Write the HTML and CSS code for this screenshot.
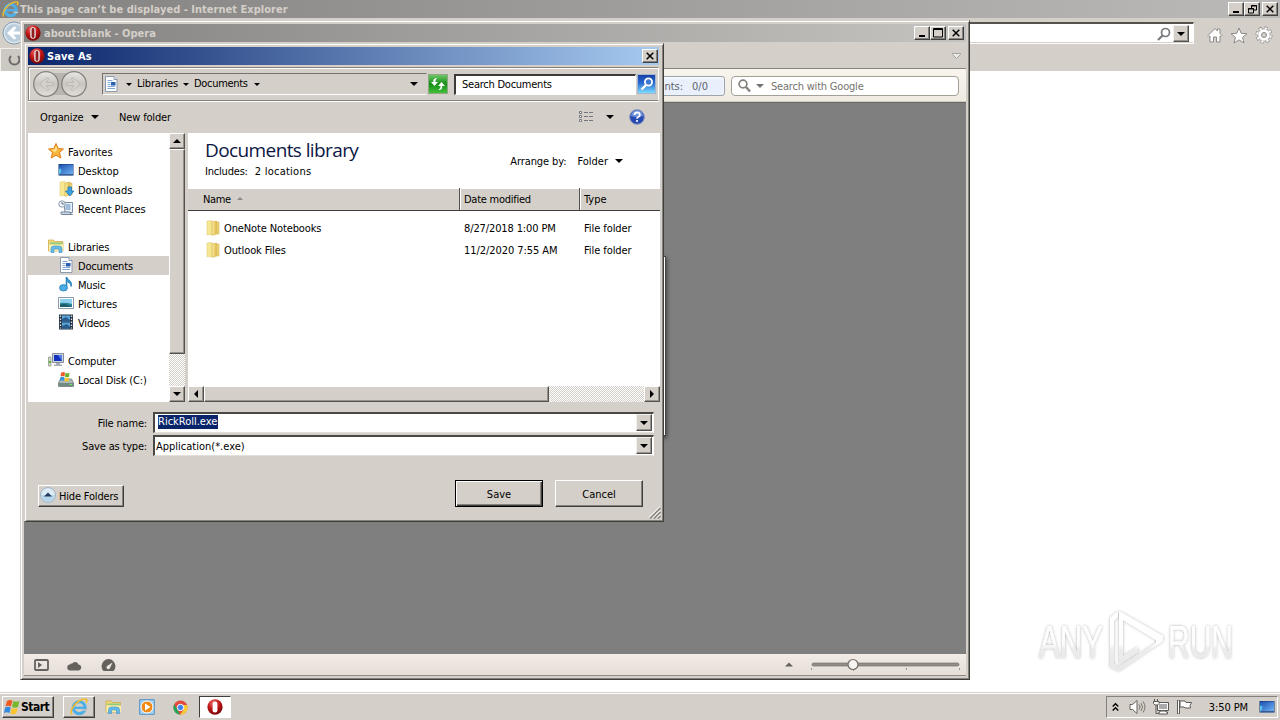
FILE: index.html
```html
<!DOCTYPE html>
<html lang="en">
<head>
<meta charset="utf-8">
<title>Desktop</title>
<link rel="stylesheet" href="styles.css">
</head>
<body>
<svg class="defs" width="0" height="0">
  <defs>
    <radialGradient id="red" cx=".4" cy=".25" r=".8"><stop offset="0" stop-color="#f07070"/><stop offset=".5" stop-color="#c01515"/><stop offset="1" stop-color="#6d0505"/></radialGradient>
    <linearGradient id="fold" x1="0" x2="1"><stop offset="0" stop-color="#fbf0a8"/><stop offset="1" stop-color="#dfb944"/></linearGradient>
    <linearGradient id="blue" x1="0" y1="0" x2="1" y2="1"><stop offset="0" stop-color="#1b4fae"/><stop offset="1" stop-color="#6fb0f2"/></linearGradient>
    <linearGradient id="circ" x1="0" y1="0" x2="0" y2="1"><stop offset="0" stop-color="#e9e7e4"/><stop offset=".5" stop-color="#c8c5c1"/><stop offset="1" stop-color="#e2dfdb"/></linearGradient>
    <linearGradient id="mark" x1="0" y1="0" x2="0" y2="1"><stop offset="0" stop-color="#ffffff"/><stop offset=".55" stop-color="#fdfdfd"/><stop offset=".65" stop-color="#ececec"/><stop offset="1" stop-color="#e8e8e8"/></linearGradient>
    <filter id="halo" x="-20%" y="-20%" width="140%" height="140%"><feDropShadow dx="0" dy="0" stdDeviation="1.5" flood-color="#000" flood-opacity=".32"/></filter>
  </defs>
  <symbol id="opera" viewBox="0 0 16 16"><ellipse cx="8" cy="8" rx="7.6" ry="7.8" fill="url(#red)"/><rect x="5.6" y="2.4" width="4.8" height="11.2" rx="2.4" fill="#fff"/></symbol>
  <symbol id="opera-ring" viewBox="0 0 16 16"><ellipse cx="8" cy="8" rx="7.6" ry="7.8" fill="url(#red)"/><rect x="5.300" y="2.2" width="5.400" height="11.600" rx="2.7" fill="#eee"/><rect x="6.600" y="3" width="2.8" height="10" rx="1.400" fill="#8d1f1f"/></symbol>
  <symbol id="ie" viewBox="0 0 16 16"><circle cx="8.2" cy="8.6" r="5.3" fill="none" stroke="#4fb0e8" stroke-width="2.7"/><path d="M4 8.7h9.6" stroke="#4fb0e8" stroke-width="2.1"/><path d="M10.800 10h4.5v1.4h-4.5z" fill="#c9c5bf"/><path d="M1.6 14.6C-.8 11 5 3.2 11 1.3c4.500-1.500 4.500.800 3.200 2.900" fill="none" stroke="#f0bd2c" stroke-width="1.4"/></symbol>
  <symbol id="doc" viewBox="0 0 16 16"><path d="M2.500.5h8.500l3 3v12H2.500z" fill="#fff" stroke="#8b9bb0"/><path d="M11 .5v3h3" fill="#dce7f2" stroke="#8b9bb0"/><path d="M4.500 4.500h5M4.500 6.500h3M4.500 8.500h3M4.500 10.500h7.500M4.500 12.500h7.500" stroke="#7ea6d4"/><path d="M8 6h4.500v3.500H8z" fill="#285fae"/></symbol>
  <symbol id="folder" viewBox="0 0 16 16"><path d="M2 1l5-.5v14l-5 .3z" fill="#f6e791" stroke="#e4cf7c" stroke-width=".6"/><path d="M7 2l4.500-1V14L7 15.500z" fill="url(#fold)" stroke="#d3b04a" stroke-width=".6"/><path d="M11.500 2H14v12h-2.500z" fill="#ecd274" stroke="#d3b450" stroke-width=".6"/></symbol>
  <symbol id="libs" viewBox="0 0 16 16"><path d="M.5 2h5l1 1.500h8.500V13H.5z" fill="#f3d976" stroke="#c9a545" stroke-width=".7"/><path d="M2 4.500h12.500v2H2z" fill="#8ecb7e"/><path d="M1 6.500h14.500V13H1z" fill="#fbefac"/><path d="M3 14.500V11q0-3 3-3h5q3 0 3 3v3.500h-3V11H6v3.500z" fill="#65bcea" stroke="#3a8ec8" stroke-width=".6"/></symbol>
  <symbol id="screen" viewBox="0 0 16 16"><path d="M.5 2h15v11.500H.5z" fill="#12366d"/><path d="M1 2.500h14v9.500H1z" fill="url(#blue)"/><path d="M1 13c3-4 3-5 1-7l-1 2z" fill="#58c5e9"/><path d="M1 12.500h14v1H1z" fill="#5f83b4"/></symbol>
  <symbol id="tri" viewBox="0 0 8 4"><path d="M0 0h8L4 4z" fill="currentColor"/></symbol>
  <symbol id="cross" viewBox="0 0 8 8"><path d="M.7.700l6.600 6.600M7.300.700L.700 7.300" stroke="#000" stroke-width="1.5"/></symbol>
</svg>

<main class="desktop">
  <section class="ie">
    <header class="ie-title"><svg class="i17"><use href="#ie"/></svg><b class="ie-name">This page can’t be displayed - Internet Explorer</b>
      <div class="winbtns"><i class="wb"><svg width="9" height="9"><path d="M1 7h6" stroke="#000" stroke-width="2"/></svg></i><i class="wb"><svg width="9" height="9"><path d="M3.500 3V.5h5V5H6M3 1h6M.5 3.500h5v4.500h-5zM0 4h6" fill="none" stroke="#000"/></svg></i><i class="wb last"><svg width="8" height="8"><use href="#cross"/></svg></i></div>
    </header>
    <div class="ie-nav">
      <svg class="ie-back" viewBox="0 0 24 24" width="24" height="24"><circle cx="12" cy="12" r="11" fill="#dde6ed" stroke="#8299ad"/><circle cx="12" cy="12" r="9" fill="#b9cddd"/><path d="M19 10.500h-7.500l3-4-2.500-1L5 12l7 6.500 2.500-1-3-4H19z" fill="#fff"/></svg>
      <div class="address"><svg width="14" height="14" viewBox="0 0 14 14"><circle cx="8.500" cy="5.500" r="4" fill="none" stroke="#77787c" stroke-width="1.700"/><path d="M5.500 8.500L1 13" stroke="#77787c" stroke-width="2.200"/></svg><i class="drop"><svg width="8" height="4"><use href="#tri"/></svg></i></div>
      <div class="ie-tools">
        <svg width="16" height="16" viewBox="0 0 16 16"><path d="M1 8.500L8 1.500l2.500 2.500V2h2.500v4.500l2 2-1 1-1-.5v6H9.500v-5h-3v5H3V9l-1 .5z" fill="#fff" stroke="#8b8a88"/></svg>
        <svg width="18" height="17" viewBox="0 0 18 17"><path d="M9 1l2.200 5.300 5.800.400-4.500 3.700 1.500 5.600-5-3.100L4 16l1.500-5.600L1 6.700l5.800-.4z" fill="#fff" stroke="#8b8a88"/></svg>
        <svg width="18" height="18" viewBox="0 0 18 18"><circle cx="9" cy="9" r="6.800" fill="none" stroke="#8b8a88" stroke-width="3.400" stroke-dasharray="3.100 2.240"/><circle cx="9" cy="9" r="6.200" fill="#fff" stroke="#8b8a88" stroke-width=".8"/><circle cx="9" cy="9" r="6.800" fill="none" stroke="#fff" stroke-width="2" stroke-dasharray="2.300 3.040" stroke-dashoffset="-.4"/><circle cx="9" cy="9" r="2.500" fill="#d4cfc8" stroke="#8b8a88"/></svg>
      </div>
    </div>
    <div class="ie-tabs"><div class="ie-tab"><svg width="16" height="14" viewBox="0 0 16 14"><path d="M5 3a5 5 0 1 0 7 0" fill="none" stroke="#6c6b69" stroke-width="2"/></svg></div></div>
  </section>

  <section class="opera">
    <header class="op-title"><svg class="i16"><use href="#opera-ring"/></svg><b class="op-name">about:blank - Opera</b>
      <div class="winbtns"><i class="wb"><svg width="9" height="9"><path d="M1 7h6" stroke="#000" stroke-width="2"/></svg></i><i class="wb"><svg width="10" height="10"><path d="M.5.500h9v8.500h-9zM0 1.500h10" fill="none" stroke="#000"/></svg></i><i class="wb last"><svg width="8" height="8"><use href="#cross"/></svg></i></div>
    </header>
    <div class="op-tabs"><svg width="9" height="6" viewBox="0 0 9 6"><path d="M.5.500h8v1L4.500 5.500.500 1.500z" fill="#eceae6" stroke="#a5a19b"/></svg></div>
    <div class="op-bar"><div class="op-find"><span class="nts">nts:</span><span>0/0</span></div>
      <div class="op-search"><svg width="13" height="13" viewBox="0 0 13 13"><circle cx="5" cy="5" r="3.900" fill="none" stroke="#85827e" stroke-width="1.700"/><path d="M8 8l4 4.500" stroke="#85827e" stroke-width="2.400"/></svg><svg class="sd" width="8" height="4"><use href="#tri"/></svg><span class="swg">Search with Google</span></div></div>
    <div class="op-page"></div>
    <footer class="op-status">
      <svg width="15" height="12" viewBox="0 0 15 12"><rect x="1" y="1" width="13" height="10" rx="1" fill="none" stroke="#65615c" stroke-width="1.800"/><path d="M4 3v6l4-3z" fill="#65615c"/></svg>
      <svg class="cloud" width="16" height="11" viewBox="0 0 16 11"><path d="M3.500 10.500a3 3 0 0 1-.5-6 1.500 1.500 0 0 1 2-.7 3.600 3.600 0 0 1 6.500.8 3 3 0 0 1 .5 5.900z" fill="#65615c"/></svg>
      <svg class="gauge" width="15" height="13" viewBox="0 0 15 13"><path d="M2.500 12A7 7 0 1 1 12.500 12z" fill="#65615c"/><path d="M11.500 3.500L9 9a1.800 1.800 0 1 1-2.500-2.200z" fill="#eee8e3"/></svg>
      <svg class="zoom" width="176" height="16" viewBox="0 0 176 16"><path d="M1 9.500h8L5 5.500z" fill="#65615c"/><rect x="28" y="6" width="147" height="3" rx="1.500" fill="#928e86" stroke="#77736c" stroke-width=".7"/><path d="M27.500 11v2M69.500 11v3M122.500 11v2M175.500 11v2" stroke="#99948d"/><circle cx="69" cy="7.500" r="5" fill="#f7f4f1" stroke="#716e69" stroke-width="1.200"/></svg>
    </footer>
  </section>

  <div class="popup"></div>

  <section class="dialog">
    <header class="dl-title"><svg class="i16"><use href="#opera-ring"/></svg><b class="dl-name">Save As</b><i class="wb last"><svg width="8" height="8"><use href="#cross"/></svg></i></header>
    <div class="dl-nav">
      <svg class="arrows" width="56" height="28" viewBox="0 0 56 28"><path d="M14 3h28v22H14z" fill="#b8b4af"/><g fill="url(#circ)" stroke="#85827e" stroke-width="1.300"><circle cx="14" cy="14" r="12.300"/><circle cx="42" cy="14" r="12.300"/></g><path d="M21 12.500h-7l3-4-2-1L8 14l7 6.500 2-1-3-4h7zM35 12.500h7l-3-4 2-1 7 6.500-7 6.500-2-1 3-4h-7z" fill="#d5d2ce" stroke="#b9b5b0" stroke-width=".8"/></svg>
      <div class="crumbs"><svg class="i16"><use href="#doc"/></svg><svg class="ct" width="6" height="3"><use href="#tri"/></svg><span class="c1">Libraries</span><svg width="6" height="3"><use href="#tri"/></svg><span class="c2">Documents</span><svg width="6" height="3"><use href="#tri"/></svg><svg class="cd" width="8" height="4"><use href="#tri"/></svg></div>
      <div class="refresh"><svg width="18" height="16" viewBox="0 0 18 16"><path d="M7 2Q3.500 3 4.500 6H2l3.500 4L9 6H6.500Q6 4 8 2zM10.500 14q3.500-1 2.500-4H16l-3.500-4L9 10h2.500q.5 2-2 4z" fill="#fff"/></svg></div>
      <div class="sdoc"><span>Search Documents</span></div>
      <div class="sbtn"><svg width="16" height="16" viewBox="0 0 16 16"><circle cx="9.500" cy="6" r="3.600" fill="#4279d7" stroke="#fff" stroke-width="1.800"/><path d="M7 9l-4.500 4.500" stroke="#fff" stroke-width="2.400"/></svg></div>
    </div>
    <div class="dl-tools"><span class="org">Organize</span><svg width="8" height="4"><use href="#tri"/></svg><span class="newf">New folder</span>
      <svg class="views" width="16" height="12" viewBox="0 0 16 12"><path d="M1.500.500h2v2h-2zM1.500 4.500h2v2h-2zM1.500 8.500h2v2h-2z" fill="#fff" stroke="#74777d"/><path d="M6 1.500h4M11 1.500h4M6 5.500h4M11 5.500h4M6 9.500h4M11 9.500h4" stroke="#74777d"/></svg><svg class="vd" width="8" height="4"><use href="#tri"/></svg>
      <svg class="help" width="16" height="16" viewBox="0 0 16 16"><circle cx="8" cy="8" r="7.300" fill="#274ab0" stroke="#8190bb"/><path d="M2 7a6 6 0 0 1 12 0q-6 2-12 0" fill="#6f90dc"/><path d="M5.500 6q0-2.500 2.700-2.500T10.800 6q0 1.300-1.600 2Q8 8.600 8 9.800" fill="none" stroke="#fff" stroke-width="1.800"/><circle cx="8" cy="12" r="1.100" fill="#fff"/></svg>
    </div>
    <div class="panes">
      <nav class="tree">
        <div class="row"><svg class="i16" viewBox="0 0 16 16"><path d="M8 .500l2.200 5 5.300.500-4 3.500 1.300 5.500L8 12.200 3.200 15l1.300-5.500L.5 6l5.300-.5z" fill="#fbb73c" stroke="#e3791b"/><path d="M8 3l1.500 3.500L7 9 3 7l3.500-.5z" fill="#ffe28a"/></svg><span class="a1">Favorites</span></div>
        <div class="row kid"><svg class="i16"><use href="#screen"/></svg><span class="a2">Desktop</span></div>
        <div class="row kid"><svg class="i16"><use href="#folder"/><path d="M10 6h3.500v4H16l-4.200 5L7.500 10H10z" fill="#38a1e4" stroke="#1b70b4" stroke-width=".7"/></svg><span class="a3">Downloads</span></div>
        <div class="row kid"><svg class="i16" viewBox="0 0 16 16"><path d="M6 2.500h8.500v10H7z" fill="#e9f2fa" stroke="#7b8ba0"/><path d="M7.500 5h5M7.500 7h5M7.500 9h5" stroke="#5789c1"/><path d="M3 12h9q0 2.500 2.500 2.500H4Q2.500 14.500 3 12z" fill="#ccdaea" stroke="#73839a"/><circle cx="4" cy="4" r="3.200" fill="#f4f7fb" stroke="#8b9aac"/><path d="M4 2v2h2" stroke="#596d88" fill="none"/></svg><span class="a4">Recent Places</span></div>
        <div class="row"></div>
        <div class="row"><svg class="i16"><use href="#libs"/></svg><span class="a5">Libraries</span></div>
        <div class="row kid sel"><svg class="i16"><use href="#doc"/></svg><span class="a6">Documents</span></div>
        <div class="row kid"><svg class="i16" viewBox="0 0 16 16"><path d="M8.500 1q1 2.500 3.500 4 2.500 2 1 5.500.3-3.500-3.500-4.500" fill="#3696cf" stroke="#2b85bd"/><path d="M8.500 1v10" stroke="#2b85bd" stroke-width="1.600"/><ellipse cx="5.500" cy="11.800" rx="4" ry="3.200" fill="#4aaee4" stroke="#2379b5" stroke-width=".7"/></svg><span class="a7">Music</span></div>
        <div class="row kid"><svg class="i16" viewBox="0 0 16 16"><path d="M.5 2.500h15v11H.5z" fill="#fff" stroke="#8b98a6"/><path d="M2 4h12v8H2z" fill="#8fd0ee"/><path d="M2 8q5-1 12 1v3H2z" fill="#2a8495"/><path d="M2 10q4-2 8 0t4 2H2z" fill="#195b6b"/></svg><span class="a8">Pictures</span></div>
        <div class="row kid"><svg class="i16" viewBox="0 0 16 16"><path d="M1 .5h14v15H1z" fill="#293444"/><path d="M4 1.500h8v6H4zM4 8.500h8v6H4z" fill="#59a6dc"/><path d="M4 5l4-2 4 3v1.500H4zM4 12l5-2 3 3v1.500H4z" fill="#295b8c"/><path d="M2.500 1.500v13M13.500 1.500v13" stroke="#d9e1e8" stroke-width="1.300" stroke-dasharray="1.500"/></svg><span class="a9">Videos</span></div>
        <div class="row"></div>
        <div class="row"><svg class="i16" viewBox="0 0 16 16"><path d="M4.500 1.500h11v9h-11z" fill="#cfd4dc" stroke="#858c99"/><path d="M6 3h8v6H6z" fill="#1332be"/><path d="M10 3h4v6z" fill="#5480e8"/><path d="M8 11h4v1.500h2v1.500H6v-1.500h2z" fill="#a7adb6"/><path d="M.5 5h2.500v9H.5z" fill="#d6dac6" stroke="#878c80" stroke-width=".7"/><path d="M1 9h2v2H1z" fill="#53b32f"/></svg><span class="a10">Computer</span></div>
        <div class="row kid"><svg class="i16" viewBox="0 0 16 16"><path d="M2.500 8h11l2 4v3.500H.5V12z" fill="#aab7b7" stroke="#6e7b7b" stroke-width=".8"/><path d="M1 12h14v3H1z" fill="#728b85"/><path d="M11.500 13h2.500v1h-2.500z" fill="#6ded59"/><path d="M3 2q2-1.500 4-.5l-.5 4q-2-1-4 0z" fill="#ec5b29"/><path d="M7.500 1.700q2 1 4 0l-.5 4q-2 1-4 0z" fill="#69b12e"/><path d="M2.400 6.200q2-1 4 0l-.5 3.500q-2-1-4 0z" fill="#3292df"/><path d="M7 6.400q2 1 4 0l-.5 3.500q-2 1-4 0z" fill="#f8c52d"/></svg><span class="a11">Local Disk (C:)</span></div>
      </nav>
      <div class="vscroll"><i class="sb up"><svg width="8" height="4"><use href="#tri"/></svg></i><i class="thumb"></i><i class="track"></i><i class="sb"><svg width="8" height="4"><use href="#tri"/></svg></i></div>
      <div class="files">
        <div class="lib"><div><h1>Documents library</h1><p><span class="inc">Includes:</span><span class="loc">2 locations</span></p></div>
          <div class="arr"><span class="ab">Arrange by:</span><span class="fo">Folder</span><svg width="8" height="4"><use href="#tri"/></svg></div></div>
        <div class="head grid"><div><span class="h1t">Name</span><svg class="up srt" width="6" height="3"><use href="#tri"/></svg></div><div><span class="h2t">Date modified</span></div><div><span class="h3t">Type</span></div></div>
        <div class="list">
          <div class="grid f"><div><svg class="i16"><use href="#folder"/></svg><span class="f1">OneNote Notebooks</span></div><div><span class="f2">8/27/2018 1:00 PM</span></div><div><span class="f3">File folder</span></div></div>
          <div class="grid f"><div><svg class="i16"><use href="#folder"/></svg><span class="f4">Outlook Files</span></div><div><span class="f5">11/2/2020 7:55 AM</span></div><div><span class="f3">File folder</span></div></div>
        </div>
        <div class="hscroll"><i class="sb left"><svg width="8" height="4"><use href="#tri"/></svg></i><i class="hthumb"></i><i class="track"></i><i class="sb right"><svg width="8" height="4"><use href="#tri"/></svg></i></div>
      </div>
    </div>
    <div class="form">
      <label>File name:</label><div class="combo"><span class="picked">RickRoll.exe</span><i class="drop"><svg width="8" height="4"><use href="#tri"/></svg></i></div>
      <label>Save as type:</label><div class="combo"><span class="app">Application(*.exe)</span><i class="drop"><svg width="8" height="4"><use href="#tri"/></svg></i></div>
    </div>
    <div class="actions">
      <div class="hide"><svg width="16" height="16" viewBox="0 0 16 16"><circle cx="8" cy="8" r="7.500" fill="#dcebf5" stroke="#a2b3c1"/><path d="M1 8h14a7 7 0 0 1-14 0" fill="#b7d5e8"/><path d="M4 9.500h8L8 5.500z" fill="#203a5b"/></svg><span class="hf">Hide Folders</span></div>
      <div class="btn save"><span>Save</span></div><div class="btn"><span>Cancel</span></div>
    </div>
    <svg class="grip" width="12" height="12"><path d="M1 11.500L11.500 1M5 11.500l6.500-6.500M9 11.500l2.500-2.500" stroke="#858179" stroke-width="1.500"/><path d="M0 10.500L10.500 0M4 10.500L11 3.500M8 10.500l3-3" stroke="#fff"/></svg>
  </section>

  <svg class="watermark" width="204" height="72" viewBox="0 0 204 72"><g filter="url(#halo)" fill="url(#mark)"><text x="5" y="54" font-size="47" textLength="64" lengthAdjust="spacingAndGlyphs">ANY</text><text x="134" y="54" font-size="47" textLength="65" lengthAdjust="spacingAndGlyphs">RUN</text><path d="M76 14l8-7v6l-4 4v43l5 3 37-24v-3l-33-20v36l15-9v5l-19 12V7l44 25v5L85 67l-9-4z"/></g></svg>

  <footer class="taskbar">
    <div class="start"><svg width="17" height="16" viewBox="0 0 17 16"><path d="M3 2q3-2 5.500-.3L7 7.500Q4 6 1.500 7.500z" fill="#ef5a22"/><path d="M9.500 2q3 1.500 6 0L14 8q-3 1.500-6 0z" fill="#77b82a"/><path d="M1.200 8.500q3-1.500 5.500 0L5.500 14Q3 12.500 0 14z" fill="#3289e0"/><path d="M7.800 9q3 1.500 6 0l-1.500 5.500q-3 1.500-6 0z" fill="#fbc42d"/></svg><b>Start</b></div>
    <div class="task t-ie"><svg width="18" height="18"><use href="#ie"/></svg></div>
    <svg class="q1" width="17" height="16"><use href="#libs"/></svg>
    <svg class="q2" width="16" height="16" viewBox="0 0 16 16"><path d="M.7.700h14.600v14.600H.700z" fill="#a8d1f1" stroke="#4c92ca"/><circle cx="8" cy="8" r="6" fill="#f18a17" stroke="#fff"/><path d="M6 4.500v7L11.500 8z" fill="#fff"/></svg>
    <svg class="q3" width="15" height="15" viewBox="0 0 15 15"><circle cx="7.500" cy="7.500" r="7" fill="#e24a3b"/><path d="M1.300 4.200L7 14.500A7 7 0 0 1 1.300 4.200" fill="#23a55a"/><path d="M14.200 5H7.500l3 5-3.500 4.500A7 7 0 0 0 14.200 5" fill="#fbcb36"/><circle cx="7.500" cy="7.500" r="3.200" fill="#3f82ee" stroke="#fff"/></svg>
    <div class="task t-op"><svg width="16" height="16"><use href="#opera"/></svg></div>
    <div class="tray">
      <svg width="7" height="9" viewBox="0 0 7 9"><path d="M.7 3.500L3.500.7l2.800 2.800M.7 7.500l2.800-2.800 2.800 2.800" fill="none" stroke="#000" stroke-width="1.400"/></svg>
      <svg class="vol" width="17" height="16" viewBox="0 0 17 16"><path d="M1 5.500h2.500L8 1.500v13l-4.500-4H1z" fill="#fff" stroke="#65635f"/><path d="M10 5.500q2 2.500 0 5M12 4q3 4 0 8M14 2.500q4 5.500 0 11" fill="none" stroke="#77746f"/></svg>
      <svg class="net" width="16" height="16" viewBox="0 0 16 16"><path d="M4.500 3.500h11v8h-11z" fill="#aaa" stroke="#5c5a57"/><path d="M5.500 4.500h9v6h-9z" fill="none" stroke="#fff"/><path d="M7 12h6v1h1.500v2H6v-2h1z" fill="#fff" stroke="#5c5a57"/><path d="M3 6v8.500h3" fill="none" stroke="#5c5a57"/><path d="M.5 2.500h5.500v2L4.500 6h-2.500L.5 4.500zM1.500 0v2.500M4.500 0v2.500" fill="#fff" stroke="#5c5a57"/></svg>
      <svg class="flag" width="17" height="16" viewBox="0 0 17 16"><path d="M2.500 1v14" stroke="#5c5a57" stroke-width="3"/><path d="M2.500 1.500v13" stroke="#fff"/><path d="M4 2h5l1 1.500h5.500l-1.500 3 .5 2.500H9L8 8H4z" fill="#fff" stroke="#5c5a57"/></svg>
      <span class="clock">3:50 PM</span><svg class="sdsk" width="16" height="16"><use href="#screen"/></svg>
    </div>
  </footer>
</main>
</body>
</html>
```
FILE: styles.css
```css
* { box-sizing: border-box; }
body { margin: 0; width: 1280px; height: 720px; overflow: hidden; font: 11px/14px "DejaVu Sans Condensed", "DejaVu Sans", sans-serif; font-stretch: condensed; color: #000; }
svg { display: block; flex: none; overflow: visible; }
i { font-style: normal; flex: none; }
span, b { white-space: nowrap; }
.defs { position: absolute; }
.i16 { width: 16px; height: 16px; }
.i17 { width: 17px; height: 17px; }
.desktop { position: relative; width: 1280px; height: 720px; background: #fff; overflow: hidden; }

.ie-title { height: 18px; display: flex; align-items: center; background: linear-gradient(90deg, #848280, #bcbab8); padding: 0 2px 0 2px; color: #d4cfc8; }
.ie-name { margin-left: 1px; font-size: 11px; letter-spacing: .02px; padding-top: 1px; }
.winbtns { display: flex; margin-left: auto; }
.wb { width: 16px; height: 14px; display: flex; align-items: center; justify-content: center; background: #d4cfc8; border: 1px solid; border-color: #fff #404040 #404040 #fff; box-shadow: inset -1px -1px #85817c; }
.wb.last { margin-left: 2px; }
.ie-nav { height: 30px; background: #d4cfc8; display: flex; }
.ie-back { margin: 3px 0 0 2px; }
.address { margin: 4px 0 0 auto; width: 1125px; height: 22px; background: #fff; border: 1px solid #fff; border-top: 2px solid #55524e; box-shadow: inset 0 -1px #d4cfc8; display: flex; justify-content: flex-end; padding-right: 4px; align-items: center; }
.address .drop { margin-left: 2px; }
.drop { width: 16px; height: 17px; background: #d4cfc8; border: 1px solid; border-color: #f2f0ed #55524e #55524e #f2f0ed; box-shadow: inset -1px -1px #96928c; display: flex; align-items: center; justify-content: center; }
.ie-tools { display: flex; align-items: center; gap: 7px; padding: 4px 6px 0 13px; width: 86px; }
.ie-tabs { height: 23px; background: #d4cfc9; }
.ie-tab { height: 23px; border-top: 1px solid #f2f0ed; border-left: 1px solid #f2f0ed; width: 30px; padding: 4px 0 0 5px; background: #ccc8c2; }

.opera { position: absolute; left: 20px; top: 20px; width: 950px; height: 660px; background: #d4cfc8; border: 1px solid; border-color: #d4cfc8 #403e3b #403e3b #d4cfc8; box-shadow: inset 1px 1px #fff, inset -1px -1px #85817c; padding: 3px; display: flex; flex-direction: column; }
.op-title { height: 18px; flex: none; background: linear-gradient(90deg, #848280, #c5c3c0); display: flex; align-items: center; color: #d4cfc8; padding: 0 2px 0 1px; }
.op-name { margin-left: 3px; font-size: 11px; letter-spacing: 0; padding-top: 1px; }
.op-tabs { height: 27px; flex: none; border-bottom: 1px solid #8b8577; display: flex; justify-content: flex-end; padding: 11px 5px 0; }
.op-bar { height: 33px; flex: none; background: linear-gradient(#f8f5ee, #efebe2); display: flex; align-items: center; justify-content: flex-end; gap: 6px; padding: 1px 7px 0 0; color: #6f6c69; border-bottom: 1px solid #d1cdc4; }
.op-bar span { padding-top: 2px; }
.op-find { height: 20px; width: 225px; border: 1px solid #9ca4aa; border-radius: 3px; background: #e9f0fc; display: flex; align-items: center; justify-content: flex-end; padding-right: 16px; gap: 9px; color: #5e626b; box-shadow: inset 0 1px 3px #fff; }
.op-search { width: 228px; height: 20px; border: 1px solid #a4a098; border-radius: 4px; background: #fff; display: flex; align-items: center; padding-left: 6px; color: #77736f; }
.swg { letter-spacing: -.2px; }
.sd { margin: 0 7px 0 5px; }
.op-page { flex: 1; background: #7f7f7f; box-shadow: inset 0 1px #6b6865; }
.op-status { height: 22px; flex: none; background: linear-gradient(#f2ebe6, #e6dfd8); border-bottom: 1px solid #8d8984; display: flex; align-items: center; padding: 1px 0 0 10px; }
.cloud { margin-left: 18px; }
.gauge { margin-left: 18px; }
.zoom { margin-left: auto; margin-right: 6px; }

.popup { position: absolute; left: 600px; top: 256px; width: 66px; height: 180px; background: #fff; border: 1px solid #444; box-shadow: inset -1px 0 #fff, 1px 2px 4px rgba(0,0,0,.5); }

.dialog { position: absolute; left: 24px; top: 43px; width: 640px; height: 479px; background: #d4cfc8; border: 1px solid; border-color: #d4cfc8 #403e3b #403e3b #d4cfc8; box-shadow: inset 1px 1px #fff, inset -1px -1px #85817c; padding: 3px 2px 3px 3px; }
.dl-title { height: 18px; width: 631px; background: linear-gradient(90deg, #0a246a, #a6caf0); color: #fff; display: flex; align-items: center; padding: 0 1px; }
.dl-name { margin-left: 2px; font-size: 11px; letter-spacing: .1px; padding-top: 1px; }
.dl-title .wb { margin-left: auto; }
.dl-nav { margin-top: 2px; width: 631px; height: 34px; border: 1px solid #85817c; border-right-color: #fff; border-bottom-color: #85817c; box-shadow: inset 1px 1px #fff, 0 1px #fff; display: flex; align-items: center; padding-left: 3px; }
.crumbs { margin-left: 14px; width: 325px; height: 22px; border: 1px solid #77736c; border-color: #77736c #d4cfc8 #fff #77736c; display: flex; align-items: center; padding-left: 0; }
.ct { margin-left: 7px; }
.c1 { margin: 0 6px 0 5px; width: 40px; letter-spacing: -.2px; }
.c2 { margin: 0 7px 0 5px; width: 53px; letter-spacing: -.3px; }
.cd { margin-left: auto; margin-right: 8px; }
.refresh { margin-left: 1px; width: 20px; height: 20px; border: 1px solid #d8eccd; outline: 1px solid #8ea885; outline-offset: -1px; background: linear-gradient(#6bc767, #168d16 50%, #42bf3a); display: flex; align-items: center; }
.sdoc { margin-left: 6px; width: 182px; height: 21px; border: 1px solid #fff; border-top: 2px solid #3d3b39; border-left: 2px solid #3d3b39; background: #fff; padding: 2px 6px; letter-spacing: -.24px; }
.sbtn { margin-left: 1px; width: 19px; height: 20px; background: linear-gradient(#1640a6, #286ad2 45%, #7edcff); border: 1px solid #a5b7cf; padding: 1px; }
.dl-tools { height: 32px; display: flex; align-items: center; padding: 0 16px 0 12px; }
.dl-tools span { padding-top: 2px; }
.org { width: 44px; margin-right: 7px; letter-spacing: -.1px; }
.newf { margin-left: 20px; letter-spacing: -.15px; }
.views { margin-left: auto; }
.vd { margin: 0 15px 0 12px; }
.panes { display: flex; height: 269px; width: 632px; }
.tree { width: 141px; background: #fff; padding-top: 9px; }
.row { height: 19px; display: flex; align-items: center; padding-left: 20px; gap: 4px; }
.row span { padding-top: 2px; }
.row svg { margin-top: -1px; }
.a4 { letter-spacing: -.1px; }
.a5, .a6, .a10, .a11 { letter-spacing: -.17px; }
.a7, .a9 { letter-spacing: -.2px; }
.kid { padding-left: 30px; }
.sel { background: #d4cfc8; }
.vscroll { width: 19px; background: #d4cfc8; display: flex; flex-direction: column; border-right: 3px solid #d4cfc8; }
.sb { width: 16px; height: 16px; background: #d4cfc8; border: 1px solid; border-color: #fff #55524e #55524e #fff; box-shadow: inset -1px -1px #96928c; display: flex; align-items: center; justify-content: center; }
.up svg, svg.up { transform: rotate(180deg); }
.left svg { transform: rotate(90deg); }
.right svg { transform: rotate(-90deg); }
.thumb { height: 205px; border: 1px solid; border-color: #fff #55524e #55524e #fff; box-shadow: inset -1px -1px #96928c; }
.track { flex: 1; background: repeating-conic-gradient(#fff 0 25%, #d4cfc8 0 50%) 0 0 / 2px 2px; }
.files { flex: 1; min-width: 0; background: #fff; display: flex; flex-direction: column; }
.lib { height: 55px; flex: none; display: flex; justify-content: space-between; padding: 7px 37px 0 17px; }
h1 { margin: 0; font: 19px/21px "Open Sans", "Noto Sans", sans-serif; color: #0c1744; letter-spacing: -.6px; white-space: nowrap; }
p { margin: 4px 0 0; display: flex; gap: 7px; }
.inc { letter-spacing: -.2px; }
.loc { letter-spacing: .25px; }
.arr { display: flex; align-items: center; height: 14px; margin-top: 15px; }
.ab { letter-spacing: -.1px; }
.fo { margin: 0 7px 0 11px; }
.arr svg { margin-top: -3px; }
.grid { display: grid; grid-template-columns: 272px 120px 1fr; }
.grid > div { display: flex; align-items: center; padding-left: 4px; }
.head { height: 23px; flex: none; background: #d4cfc8; border-bottom: 1px solid #403e3b; box-shadow: inset 0 1px #fff; }
.head > div { border-right: 1px solid #55524e; box-shadow: inset 1px 0 #fff; padding-top: 2px; }
.head > div:first-child { padding-left: 15px; box-shadow: none; }
.head > div:last-child { border-right: 0; }
.h1t { letter-spacing: -.4px; }
.h2t { letter-spacing: -.25px; }
.srt { margin: -4px 0 0 6px; color: #8b8883; }
.list { flex: 1; padding-top: 6px; }
.f { height: 22px; }
.f span { padding-top: 1px; }
.f svg { margin-top: -1px; }
.f1, .f2, .f4 { letter-spacing: -.12px; }
.f3, .f5 { letter-spacing: -.07px; }
.f > div:first-child { padding-left: 17px; gap: 3px; }
.hscroll { height: 16px; display: flex; }
.hthumb { width: 345px; background: #d4cfc8; border: 1px solid; border-color: #fff #55524e #55524e #fff; box-shadow: inset -1px -1px #96928c; }
.form { margin-top: 10px; display: grid; grid-template-columns: 119px 501px; column-gap: 6px; row-gap: 2px; align-items: center; }
label { text-align: right; padding-top: 3px; white-space: nowrap; letter-spacing: -.18px; }
.combo { height: 21px; background: #fff; border: 2px solid #4a4845; border-right: 1px solid #fff; border-bottom: 1px solid #e2dfda; display: flex; align-items: center; padding: 0 1px; }
.combo .drop { margin: -1px 0 0 auto; }
.app { padding-top: 1px; }
.picked { background: #0a246a; color: #fff; margin: -2px 0 0 2px; height: 14px; line-height: 14px; padding-right: 1px; }
.actions { display: flex; padding: 24px 18px 0 10px; }
.hide { margin-top: 5px; width: 86px; height: 22px; border: 1px solid; border-color: #fff #403e3b #403e3b #fff; box-shadow: inset -1px -1px #85817c; display: flex; align-items: center; gap: 3px; padding-left: 1px; }
.hide svg { margin-top: -2px; }
.hf { letter-spacing: -.18px; padding-top: 2px; }
.btn { width: 88px; height: 27px; border: 1px solid; border-color: #fff #403e3b #403e3b #fff; box-shadow: inset -1px -1px #85817c; display: flex; align-items: center; justify-content: center; padding-top: 2px; }
.save { margin-left: auto; margin-right: 12px; border-color: #000; box-shadow: inset 1px 1px #fff, inset -1px -1px #403e3b, inset -2px -2px #85817c; }
.grip { position: absolute; right: 2px; bottom: 2px; }

.watermark { position: absolute; left: 1034px; top: 604px; font-family: "Liberation Sans", Arial, sans-serif; }

.taskbar { position: absolute; left: 0; top: 692px; width: 1280px; height: 28px; background: #d4cfc8; border-top: 1px solid #d4cfc8; box-shadow: inset 0 1px #fff; display: flex; padding-top: 3px; align-items: flex-start; }
.start { margin-left: 2px; width: 52px; height: 22px; border: 1px solid; border-color: #fff #403e3b #403e3b #fff; box-shadow: inset -1px -1px #85817c; display: flex; align-items: center; padding-left: 1px; gap: 0; font-size: 12px; letter-spacing: -.5px; }
.task { width: 32px; height: 22px; border: 1px solid; border-color: #fff #403e3b #403e3b #fff; box-shadow: inset -1px -1px #85817c; display: flex; align-items: center; justify-content: center; }
.t-ie { margin-left: 9px; }
.q1 { margin: 3px 0 0 10px; }
.q2 { margin: 3px 0 0 17px; }
.q3 { margin: 4px 0 0 18px; }
.t-op { margin-left: 11px; background: #fff; border-color: #403e3b #fff #fff #403e3b; box-shadow: none; }
.tray { margin-left: auto; margin-right: 2px; width: 172px; height: 22px; border: 1px solid; border-color: #85817c #fff #fff #85817c; display: flex; align-items: center; padding-left: 5px; }
.vol { margin-left: 10px; }
.net { margin-left: 7px; }
.flag { margin-left: 7px; }
.clock { margin: 0 0 0 auto; letter-spacing: -.1px; padding-top: 1px; }
.sdsk { margin: 0 2px 0 11px; }
```
